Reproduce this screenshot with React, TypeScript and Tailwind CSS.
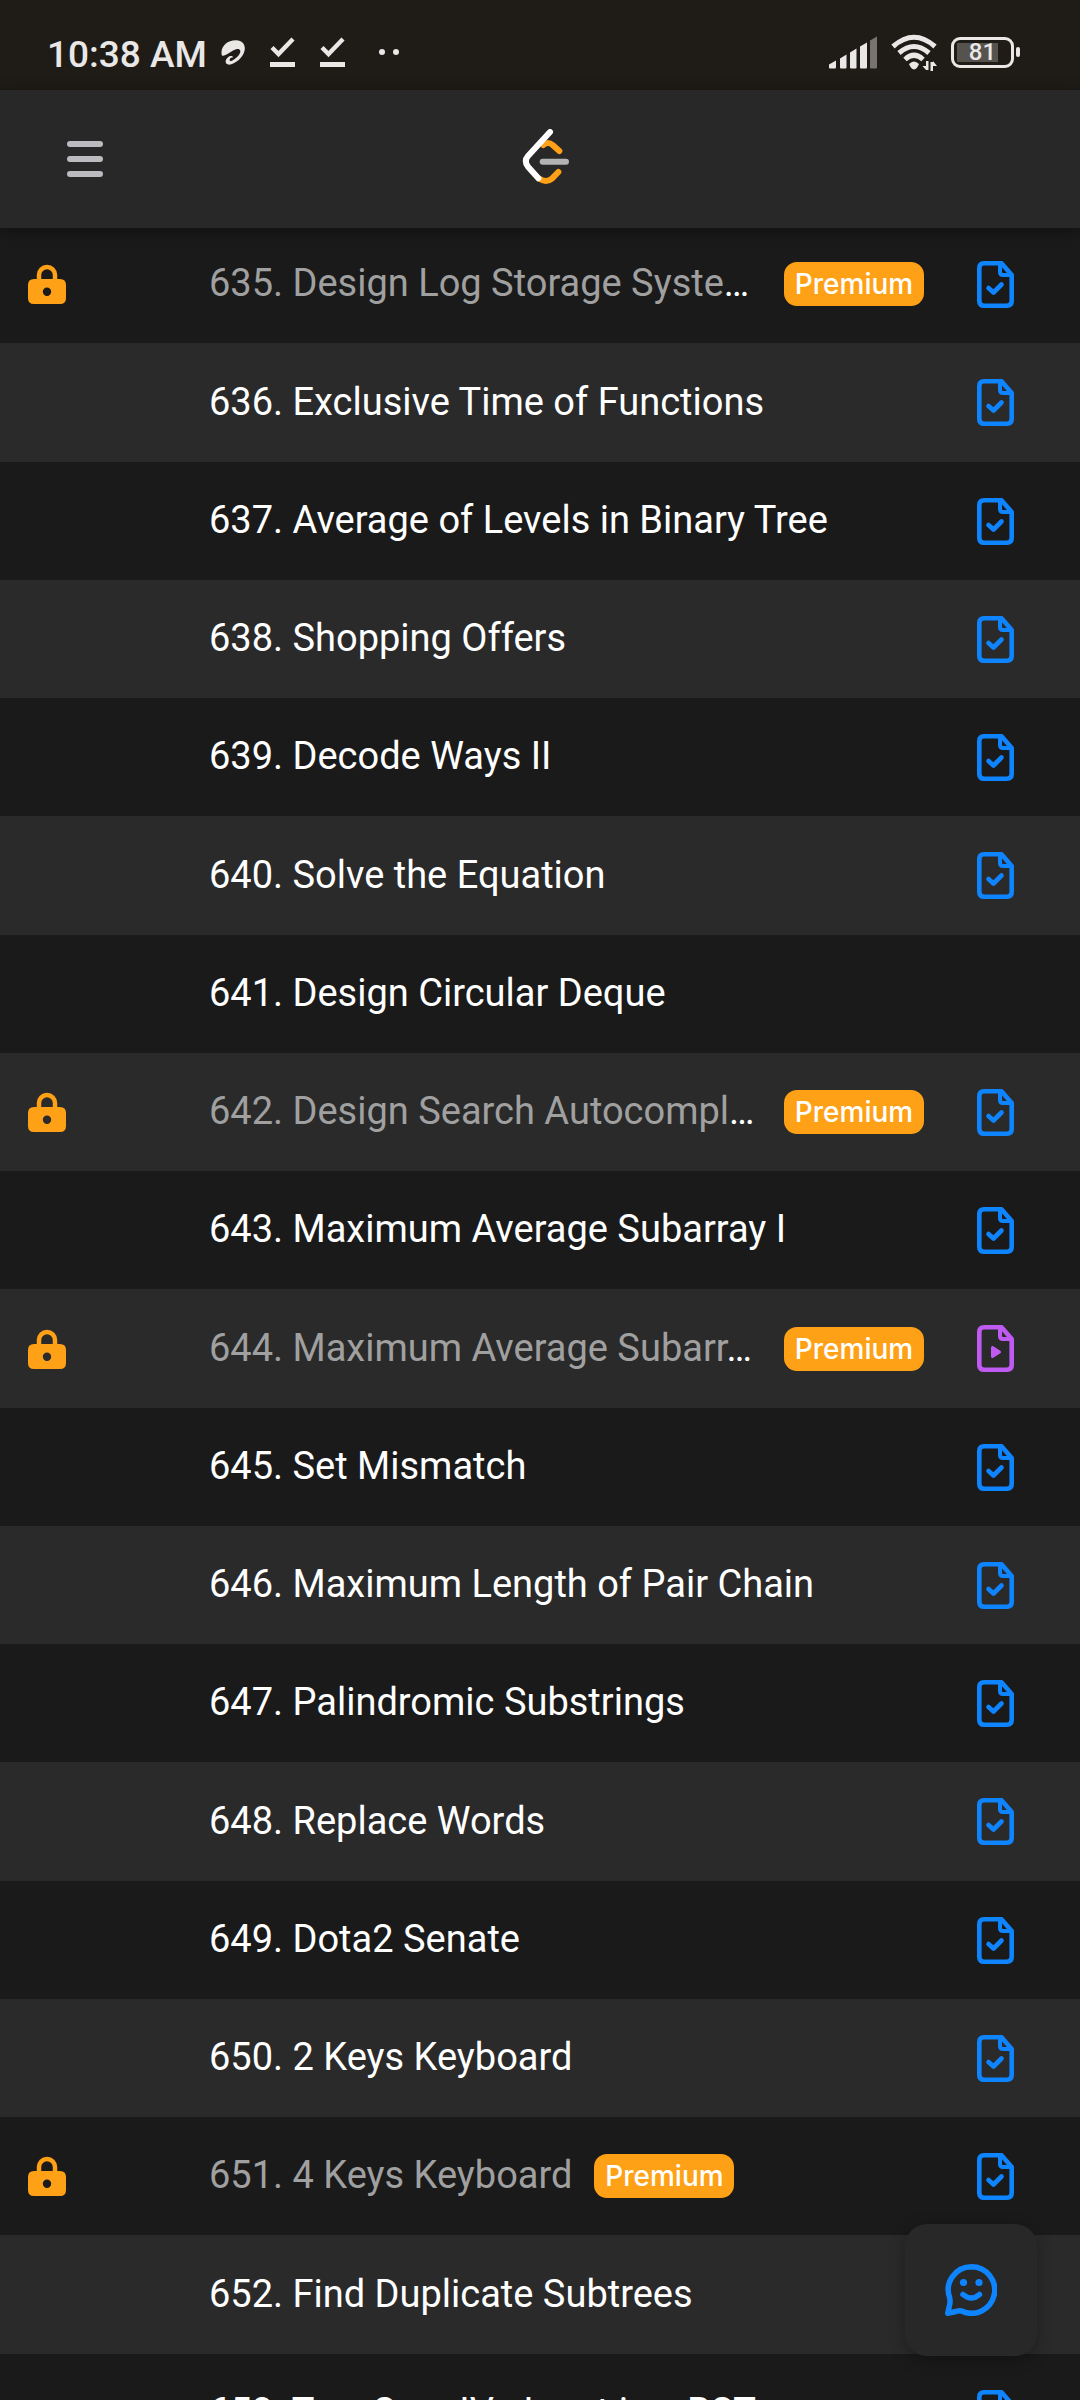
type Problem = {
  title: string;
  clipped?: boolean;
  locked?: boolean;
  solution?: "article" | "video";
};

const problems: Problem[] = [
  { title: "635. Design Log Storage Syste", clipped: true, locked: true, solution: "article" },
  { title: "636. Exclusive Time of Functions", solution: "article" },
  { title: "637. Average of Levels in Binary Tree", solution: "article" },
  { title: "638. Shopping Offers", solution: "article" },
  { title: "639. Decode Ways II", solution: "article" },
  { title: "640. Solve the Equation", solution: "article" },
  { title: "641. Design Circular Deque" },
  { title: "642. Design Search Autocompl", clipped: true, locked: true, solution: "article" },
  { title: "643. Maximum Average Subarray I", solution: "article" },
  { title: "644. Maximum Average Subarr", clipped: true, locked: true, solution: "video" },
  { title: "645. Set Mismatch", solution: "article" },
  { title: "646. Maximum Length of Pair Chain", solution: "article" },
  { title: "647. Palindromic Substrings", solution: "article" },
  { title: "648. Replace Words", solution: "article" },
  { title: "649. Dota2 Senate", solution: "article" },
  { title: "650. 2 Keys Keyboard", solution: "article" },
  { title: "651. 4 Keys Keyboard", locked: true, solution: "article" },
  { title: "652. Find Duplicate Subtrees", solution: "article" },
  { title: "653. Two Sum IV - Input is a BST", solution: "article" },
];

function CarrierIcon() {
  return (
    <svg viewBox="0 0 72 76" className="h-[25px] w-6" fill="#e9e8e6" aria-hidden="true">
      <path d="M2 46C-4 22 18 0 46 1C66 2 75 16 71 33C67 54 42 74 24 75C12 75 10 62 20 53C28 46 38 48 35 54C30 52 27 56 26 60C25 66 31 65 38 60C50 52 60 41 58 33C56 25 46 27 35 33C24 40 8 52 2 46Z" />
    </svg>
  );
}

function DoneIcon() {
  return (
    <svg viewBox="0 0 25 30" className="h-[30px] w-[25px]" aria-hidden="true">
      <path d="M2 10.500l6.500 6.500L23 2" fill="none" stroke="#e9e8e6" strokeWidth="4.400" />
      <path d="M0 25h25v5H0z" fill="#e9e8e6" />
    </svg>
  );
}

function SignalIcon() {
  return (
    <svg viewBox="0 0 49 33" className="h-[33px] w-[49px]" fill="#e9e8e6" aria-hidden="true">
      <path d="M0 28.500L7 24.500V31.500q0 1-1 1H1q-1 0-1-1z" />
      <path d="M11 22.500L17.500 18.500V31.500q0 1-1 1H12q-1 0-1-1z" />
      <path d="M21 16.500L27.500 12.500V31.500q0 1-1 1H22q-1 0-1-1z" />
      <path d="M31 10.500L38 6.500V31.500q0 1-1 1H32q-1 0-1-1z" />
      <path d="M41 4.500L48 .500V31.500q0 1-1 1H42q-1 0-1-1z" fill="#787371" />
    </svg>
  );
}

function WifiIcon() {
  return (
    <svg viewBox="0 0 47 37" className="h-[37px] w-[47px]" aria-hidden="true">
      <g fill="none" stroke="#e9e8e6" strokeWidth="5">
        <path d="M2 12.500Q23 -6 44 12.500" />
        <path d="M8 19Q23 6 38 19" />
        <path d="M14 25.500Q23 17 32 25.500" />
      </g>
      <path d="M18 30Q23 25 28 30Q26 35 23 35.500Q20 35 18 30Z" fill="#e9e8e6" />
      <path d="M35 27v9h2.500v-9zM31.500 32l3.500 4v-4zM39.500 28v9H42v-9zM42 27l4 5h-4z" fill="#e9e8e6" />
    </svg>
  );
}

function Battery() {
  return (
    <div className="flex items-center gap-[2px]">
      <div className="flex h-[31px] w-[63px] rounded-[9px] border-[3px] border-[#e9e8e6] p-[3px]">
        <div className="grid w-full place-items-center bg-linear-to-r from-[#56534f] from-80% to-transparent to-80% text-[24px] leading-[18px] font-medium text-[#e9e8e6]">
          81
        </div>
      </div>
      <div className="h-[10px] w-1 rounded-full bg-[#e9e8e6]" />
    </div>
  );
}

function StatusBar() {
  return (
    <div className="flex h-[90px] shrink-0 items-center bg-[#1f1c17] pt-4 pr-[60px] pl-[47px] text-[#e9e8e6]">
      <span className="pt-[2px] text-[37px] leading-none font-medium">10:38 AM</span>
      <div className="ml-[14px] flex items-center gap-[25px] pb-[2px]">
        <CarrierIcon />
        <DoneIcon />
        <DoneIcon />
        <div className="ml-[9px] flex gap-2">
          <span className="size-[6px] rounded-full bg-[#e9e8e6]" />
          <span className="size-[6px] rounded-full bg-[#e9e8e6]" />
        </div>
      </div>
      <div className="ml-auto flex items-center gap-[13px] pb-[2px]">
        <SignalIcon />
        <WifiIcon />
        <Battery />
      </div>
    </div>
  );
}

function Logo() {
  return (
    <svg viewBox="30 57 180 180" className="size-[60px]" fill="none" strokeWidth="18" strokeLinecap="round" strokeLinejoin="round" aria-hidden="true">
      <path d="M130 105Q144 93 158 105L178 123" stroke="#ffa116" />
      <path d="M118 206Q138 220 156 206L175 186" stroke="#ffa116" />
      <path d="M128 155H198" stroke="#b3b3b3" />
      <path d="M150 66L84 138Q71 153 84 170L115 205" stroke="#fff" />
    </svg>
  );
}

function LockIcon() {
  return (
    <svg viewBox="0 0 38 40" className="h-10 w-[38px]" aria-hidden="true">
      <path d="M11 17V11a8 8 0 0 1 16 0v6" fill="none" stroke="#ffa116" strokeWidth="4.500" />
      <path
        fill="#ffa116"
        fillRule="evenodd"
        d="M6 15h26q6 0 6 6v13q0 6-6 6H6q-6 0-6-6V21q0-6 6-6zM19 23.500a4.200 4.200 0 1 0 0 8.400a4.200 4.200 0 1 0 0-8.400z"
      />
    </svg>
  );
}

function SolutionIcon({ kind }: { kind: "article" | "video" }) {
  return (
    <svg
      viewBox="0 0 37 47"
      className={kind === "article" ? "h-[47px] w-[37px] text-[#0f84ff]" : "h-[47px] w-[37px] text-[#bf5af2]"}
      fill="none"
      stroke="currentColor"
      strokeWidth="4.600"
      strokeLinecap="round"
      strokeLinejoin="round"
      aria-hidden="true"
    >
      <path d="M7 2.300H24.500L34.700 14V40Q34.700 44.700 30 44.700H7Q2.300 44.700 2.300 40V7Q2.300 2.300 7 2.300Z" />
      <path d="M23 3V11Q23 14 26 14H34" strokeWidth="4" />
      {kind === "article" ? (
        <path d="M11.500 27L16.500 31.500L24.500 23.500" />
      ) : (
        <path d="M15.500 22.500V31.500L22.500 27Z" fill="currentColor" strokeWidth="3" />
      )}
    </svg>
  );
}

function ProblemRow({ problem }: { problem: Problem }) {
  return (
    <li className="flex h-[118px] items-center bg-[#1a1a1a] pr-[66px] pl-7 nth-[2n]:bg-[#2a2a2a] nth-[4n+2]:h-[119px]">
      <div className="w-[181px] shrink-0">{problem.locked && <LockIcon />}</div>
      <div className="flex min-w-0 flex-1 items-center gap-[22px]">
        <a
          href="#"
          className={
            problem.clipped
              ? "flex-1 truncate pb-[2px] text-[38px] leading-[46px] text-white"
              : "truncate pb-[2px] text-[38px] leading-[46px] text-white"
          }
        >
          <span className={problem.locked ? "text-[#a0a0a0]" : "text-white"}>{problem.title}</span>
          {problem.clipped && "…"}
        </a>
        {problem.locked && (
          <span className="flex h-11 w-[140px] shrink-0 items-center justify-center rounded-[13px] bg-[#ffa116] font-[Inter,sans-serif] text-[28px] leading-none font-medium text-white">
            Premium
          </span>
        )}
      </div>
      <div className="flex w-[90px] shrink-0 justify-end">
        {problem.solution && (
          <a href="#" aria-label={problem.solution === "video" ? "Video solution" : "Solution"}>
            <SolutionIcon kind={problem.solution} />
          </a>
        )}
      </div>
    </li>
  );
}

function FeedbackButton() {
  return (
    <button
      type="button"
      aria-label="Feedback"
      className="fixed right-[43px] bottom-11 z-20 grid size-[132px] place-items-center rounded-[22px] bg-[#282828] shadow-[0_4px_16px_rgba(0,0,0,0.3)]"
    >
      <svg viewBox="0 0 52 52" className="size-[52px]" fill="none" stroke="#0f84ff" strokeWidth="5.500" strokeLinecap="round" strokeLinejoin="round" aria-hidden="true">
        <path d="M26.500 2.750A23.250 23.250 0 1 1 16.500 47Q14 46.500 11 47.500L2.750 49.250L4.800 40Q5.400 37 4.700 34A23.250 23.250 0 0 1 26.500 2.750Z" />
        <path d="M18 30.500Q26.500 37.500 34.500 30.500" />
        <circle cx="18.500" cy="18.500" r="3.600" fill="#0f84ff" stroke="none" />
        <circle cx="34" cy="18.500" r="3.600" fill="#0f84ff" stroke="none" />
      </svg>
    </button>
  );
}

export default function App() {
  return (
    <div className="flex h-screen flex-col overflow-hidden bg-[#1a1a1a] font-[Roboto,sans-serif]">
      <StatusBar />
      <header className="relative z-10 grid h-[138px] shrink-0 grid-cols-[1fr_auto_1fr] items-center bg-[#282828] px-[67px] shadow-[0_2px_14px_rgba(0,0,0,0.4)]">
        <button type="button" aria-label="Menu" className="flex w-9 flex-col gap-[9px]">
          <span className="h-[6px] rounded-full bg-[#bcbcc0]" />
          <span className="h-[6px] rounded-full bg-[#bcbcc0]" />
          <span className="h-[6px] rounded-full bg-[#bcbcc0]" />
        </button>
        <a href="#" aria-label="Home">
          <Logo />
        </a>
      </header>
      <main className="-mt-[3px] min-h-0 flex-1 overflow-y-auto [scrollbar-width:none]">
        <ul>
          {problems.map((problem) => (
            <ProblemRow key={problem.title} problem={problem} />
          ))}
        </ul>
      </main>
      <FeedbackButton />
    </div>
  );
}
